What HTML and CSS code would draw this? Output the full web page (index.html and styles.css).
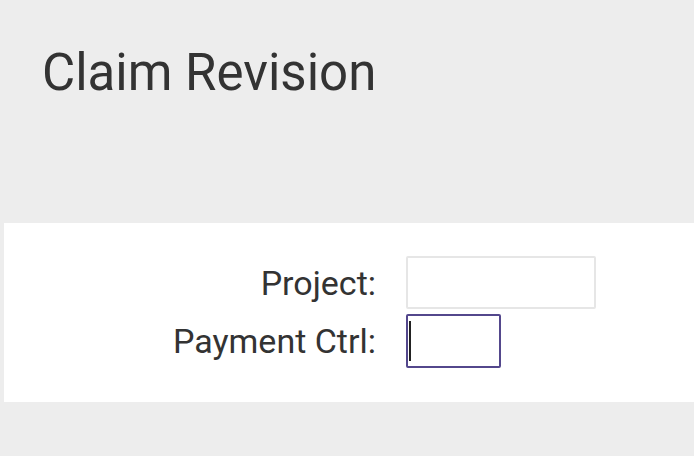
FILE: index.html
```html
<!DOCTYPE html>
<html lang="en">
<head>
<meta charset="UTF-8">
<title>Claim Revision</title>
<link rel="stylesheet" href="styles.css">
</head>
<body>
    <div class="header">
        <h1>Claim Revision</h1>
    </div>
    <div class="panel">
        <form class="form-grid">
            <label class="form-label" for="project">Project:</label>
            <div class="field field-wide" id="project"></div>

            <label class="form-label" for="paymentCtrl">Payment Ctrl:</label>
            <div class="field field-short field-focus" id="paymentCtrl">
                <span class="caret"></span>
            </div>
        </form>
    </div>
</body>
</html>
```

FILE: styles.css
```css
body {
    font-family: Roboto, "Liberation Sans", Arial, sans-serif;
    background-color: #ededed;
    margin: 0;
    padding: 0;
    color: #333;
}
.header {
    padding: 43px 0 0 42px;
    height: 223px;
    box-sizing: border-box;
}
h1 {
    margin: 0;
    font-size: 51px;
    font-weight: 400;
    line-height: 60px;
    color: #333;
}
.panel {
    margin-left: 4px;
    background: white;
    padding-top: 33px;
    height: 179px;
    box-sizing: border-box;
}
.form-grid {
    display: grid;
    grid-template-columns: 372px auto;
    column-gap: 30px;
    row-gap: 5px;
    align-items: center;
}
.form-label {
    text-align: right;
    font-size: 34px;
    line-height: 40px;
    color: #333;
}
.field {
    height: 53px;
    box-sizing: border-box;
    border: 2px solid #e6e6e6;
    border-radius: 2px;
    background: white;
}
.field-wide {
    width: 190px;
}
.field-short {
    width: 95px;
    height: 54px;
}
.field-focus {
    border-color: #53478c;
    display: flex;
    align-items: center;
    padding-left: 1px;
}
.caret {
    width: 2px;
    height: 40px;
    background: #222;
}
```
